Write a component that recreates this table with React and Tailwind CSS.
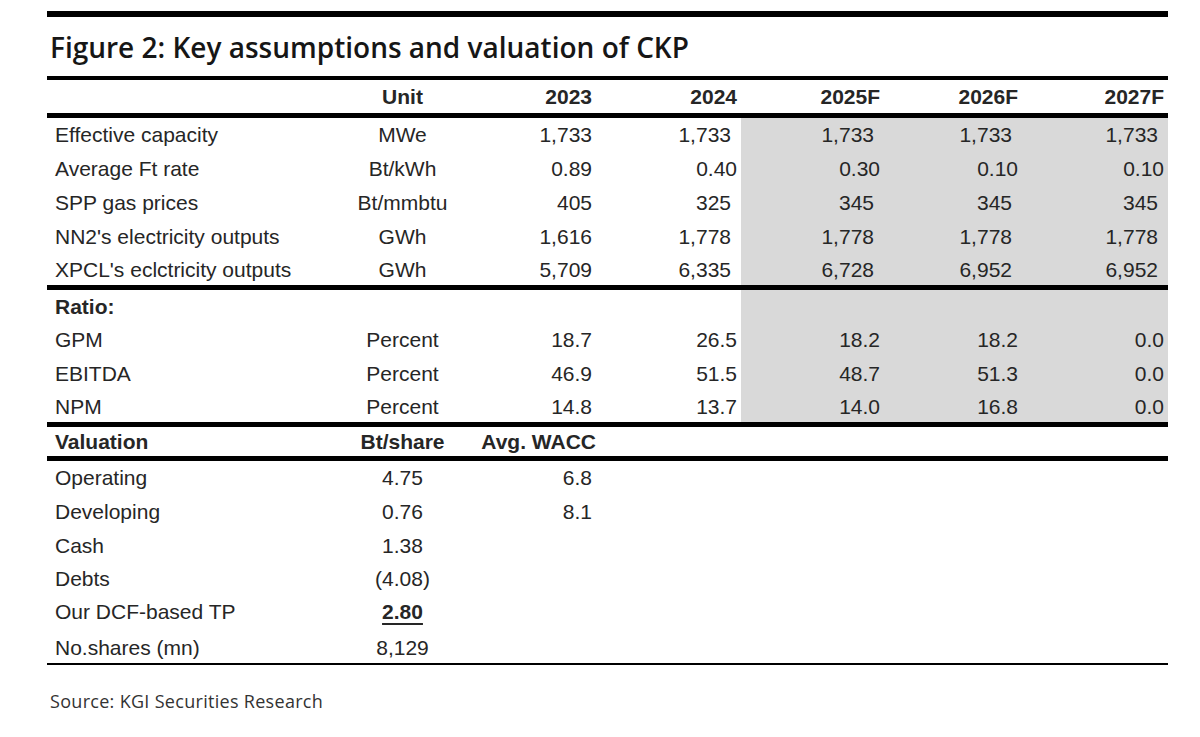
import React from 'react';

const cols = 'grid grid-cols-[283px_145px_121px_145px_143px_138px_146px]';
const gray = 'bg-[#d9d9d9]';

const assumptions = [
    { label: 'Effective capacity', unit: 'MWe', vals: ['1,733', '1,733', '1,733', '1,733', '1,733'], h: 'h-[33px]', int: true },
    { label: 'Average Ft rate', unit: 'Bt/kWh', vals: ['0.89', '0.40', '0.30', '0.10', '0.10'], h: 'h-[34px]' },
    { label: 'SPP gas prices', unit: 'Bt/mmbtu', vals: ['405', '325', '345', '345', '345'], h: 'h-[34px]', int: true },
    { label: "NN2's electricity outputs", unit: 'GWh', vals: ['1,616', '1,778', '1,778', '1,778', '1,778'], h: 'h-[34px]', int: true },
    { label: "XPCL's eclctricity outputs", unit: 'GWh', vals: ['5,709', '6,335', '6,728', '6,952', '6,952'], h: 'h-[32px]', int: true },
];

const ratios = [
    { label: 'GPM', unit: 'Percent', vals: ['18.7', '26.5', '18.2', '18.2', '0.0'], h: 'h-[34px]' },
    { label: 'EBITDA', unit: 'Percent', vals: ['46.9', '51.5', '48.7', '51.3', '0.0'], h: 'h-[34px]' },
    { label: 'NPM', unit: 'Percent', vals: ['14.8', '13.7', '14.0', '16.8', '0.0'], h: 'h-[32px]' },
];

const valuation = [
    { label: 'Operating', share: '4.75', wacc: '6.8', h: 'h-[33px]' },
    { label: 'Developing', share: '0.76', wacc: '8.1', h: 'h-[34px]' },
    { label: 'Cash', share: '1.38', wacc: '', h: 'h-[34px]' },
    { label: 'Debts', share: '(4.08)', wacc: '', h: 'h-[33px]' },
    { label: 'Our DCF-based TP', share: '2.80', wacc: '', h: 'h-[33px]', tp: true },
    { label: 'No.shares (mn)', share: '8,129', wacc: '', h: 'h-[35px] pt-[3px]' },
];

const DataRow = ({ label, unit, vals, h, int }) => (
    <div className={`${cols} ${h}`}>
        <div className="flex items-center pl-2">{label}</div>
        <div className="flex items-center justify-center">{unit}</div>
        {vals.map((v, i) => (
            <div
                key={i}
                className={`flex items-center justify-end ${int && i > 0 ? 'pr-[10px]' : 'pr-1'} ${i >= 2 ? gray : ''}`}
            >
                {v}
            </div>
        ))}
    </div>
);

export default function App() {
    return (
        <div className="w-[1200px] min-h-[737px] bg-white pt-[11px] pl-[47px] text-[#262626]">
            <div className="w-[1121px] font-['Liberation_Sans',Arial,sans-serif] text-[21px] leading-none whitespace-nowrap">
                <div className="h-[6px] bg-black" />
                <div className="h-[59px] flex items-center pl-[3px] font-['Open_Sans',sans-serif] text-[28px] font-semibold text-[#161616]">
                    Figure 2: Key assumptions and valuation of CKP
                </div>
                <div className="h-[4px] bg-black" />

                {/* header */}
                <div className={`${cols} h-[33px] font-bold`}>
                    <div />
                    <div className="flex items-center justify-center">Unit</div>
                    <div className="flex items-center justify-end pr-1">2023</div>
                    <div className="flex items-center justify-end pr-1">2024</div>
                    <div className="flex items-center justify-end pr-1">2025F</div>
                    <div className="flex items-center justify-end pr-1">2026F</div>
                    <div className="flex items-center justify-end pr-1">2027F</div>
                </div>
                <div className="h-[5px] bg-black" />

                {assumptions.map((r) => (
                    <DataRow key={r.label} {...r} />
                ))}
                <div className="h-[5px] bg-black" />

                <div className={`${cols} h-[32px]`}>
                    <div className="flex items-center pl-2 font-bold">Ratio:</div>
                    <div />
                    <div />
                    <div />
                    <div className={gray} />
                    <div className={gray} />
                    <div className={gray} />
                </div>
                {ratios.map((r) => (
                    <DataRow key={r.label} {...r} />
                ))}
                <div className="h-[5px] bg-black" />

                <div className={`${cols} h-[29px] font-bold`}>
                    <div className="flex items-center pl-2">Valuation</div>
                    <div className="flex items-center justify-center">Bt/share</div>
                    <div className="flex items-center justify-end">Avg. WACC</div>
                </div>
                <div className="h-[5px] bg-black" />

                {valuation.map((r) => (
                    <div key={r.label} className={`${cols} ${r.h}`}>
                        <div className="flex items-center pl-2">{r.label}</div>
                        <div className="flex items-center justify-center">
                            {r.tp ? (
                                <span className="underline decoration-2 underline-offset-4 font-bold">{r.share}</span>
                            ) : (
                                r.share
                            )}
                        </div>
                        <div className="flex items-center justify-end pr-1">{r.wacc}</div>
                    </div>
                ))}
                <div className="h-[2px] bg-black" />

                <div className="pt-[27px] pl-[3px] font-['Open_Sans',sans-serif] text-[18px] tracking-[0.3px] text-[#333]">
                    Source: KGI Securities Research
                </div>
            </div>
        </div>
    );
}
